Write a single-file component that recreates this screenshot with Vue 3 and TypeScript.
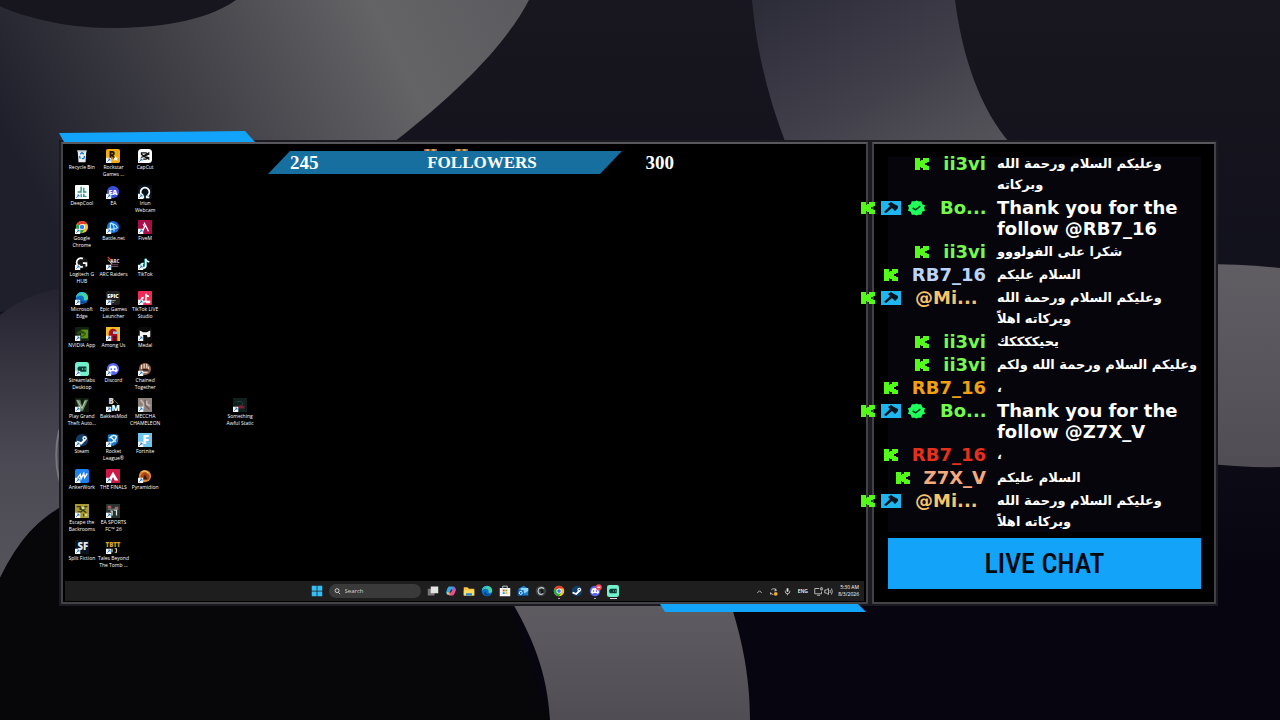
<script setup lang="ts">
interface Shape { d?: string; f?: string; s?: string; w?: number; t?: string; x?: number; y?: number; z?: number }
interface Art { bg?: string; r?: number; shapes: Shape[] }
interface Shortcut { art: string; lines: string[]; col: number; row: number; plain?: boolean }
interface Message { badges: string[]; name: string; color: string; lines: string[]; arabic?: boolean; cut?: boolean }

const disc = 'M8 1a7 7 0 1 1 0 14a7 7 0 1 1 0-14z'

const arts: Record<string, Art> = {
  bin: { shapes: [{ d: 'M3 2h10l-1 13H4z', f: '#e8eef3' }, { d: 'M2.500 1.500h11v1.500h-11z', f: '#b9c5cf' }, { d: 'M6 6l2-2 2 2M11 8l-1 3H8M6 11L5 8', s: '#1b7fd6', w: 1.6 }] },
  rockstar: { bg: '#f4a916', r: 2, shapes: [{ t: 'R', x: 7, y: 11, z: 11, f: '#151008' }, { d: 'M11 8l1 2 2 0-1.500 1.500 1 2-2.500-1-2 1 .5-2L8 10l2 0z', f: '#fff' }] },
  capcut: { bg: '#fff', r: 4, shapes: [{ d: 'M13 4L6 8l7 4M10 4.500H4v2l9 4M10 11.500H4v-2l9-4', s: '#111', w: 1.5 }] },
  deepcool: { bg: '#fff', r: 1, shapes: [{ d: 'M7 2v6H3M10 3v5h3M7 14v-4M10 10v3h3', s: '#219c83', w: 1.6 }] },
  ea: { shapes: [{ d: disc, f: '#3a50dc' }, { t: 'EA', x: 8, y: 11, z: 8, f: '#fff' }] },
  iriun: { bg: '#06111d', r: 2, shapes: [{ d: 'M5 12a5 5 0 1 1 6 0M3 14h3v-2M13 14h-3v-2', s: '#fff', w: 2 }] },
  chrome: { shapes: [{ d: disc, f: '#fbc116' }, { d: 'M8 8L2 4.500A7 7 0 0 1 14 4.500H8z', f: '#e33b2e' }, { d: 'M8 8L2 4.500A7 7 0 0 0 8 15l3-5z', f: '#2ba24c' }, { d: 'M8 4.500a3.500 3.500 0 1 1 0 7a3.500 3.500 0 1 1 0-7z', f: '#fff' }, { d: 'M8 5.500a2.500 2.500 0 1 1 0 5a2.500 2.500 0 1 1 0-5z', f: '#3b7ded' }] },
  battle: { shapes: [{ d: disc, f: '#0f6fd8' }, { d: 'M5 12V4c4 0 7 2 8 5-3 2-8 2-10 0M6 3c3 3 4 6 3 10', s: '#b9ecff', w: 1.3 }] },
  fivem: { bg: '#a80d46', r: 1, shapes: [{ d: 'M7 3l5 10M8 7l-3 6M6 5l1 2', s: '#fff', w: 1.4 }] },
  logitech: { shapes: [{ d: disc, f: '#161616' }, { d: 'M9 3a5 5 0 1 0 0 9M9 8h4v4', s: '#fff', w: 2 }] },
  arc: { shapes: [{ d: 'M2 1l6 6', s: '#d9443a', w: 1.6 }, { d: 'M2 4l5 5', s: '#e5b83b', w: 1.2 }, { t: 'ARC', x: 10, y: 8, z: 5, f: '#d8c6d6' }, { d: 'M5 10h9M6 12h8', s: '#83506c', w: 1 }] },
  tiktok: { bg: '#030303', r: 3, shapes: [{ d: 'M8.500 3v8a2.500 2.500 0 1 1-2.500-2.500M8.500 3c0 2 2 3.500 4 3.500', s: '#38d8df', w: 2.4 }, { d: 'M9 3v8a2.500 2.500 0 1 1-2.500-2.500M9 3c0 2 2 3.500 4 3.500', s: '#fff', w: 1.6 }] },
  edge: { shapes: [{ d: disc, f: '#0c71c6' }, { d: 'M1 8a7 7 0 0 1 14 0c0 3-4 3-5 2 1-3-1-5-4-5S1 7 1 8z', f: '#45d3a4' }, { d: 'M1 8a7 7 0 0 1 9-6.500C6 3 3 5 1 8z', f: '#27b7df' }, { d: 'M6 8c0 4 4 5 7 4-3 3-8 3-9-1z', f: '#0b3f8d' }] },
  epic: { bg: '#202020', r: 2, shapes: [{ t: 'EPIC', x: 8, y: 8, z: 6, f: '#fff' }, { d: 'M5 11h6M7 13h2', s: '#aaa', w: 1 }] },
  live: { bg: '#f02a56', r: 1, shapes: [{ d: 'M9 3v7a2.500 2.500 0 1 1-2.500-2.500M9 3c0 2 2 3 3.500 3', s: '#fff', w: 1.9 }, { d: 'M9 11h5v3H9z', f: '#fff' }] },
  nvidia: { bg: '#112211', r: 1, shapes: [{ d: 'M7 3h8v10H7z', f: '#5f9410' }, { d: 'M2 8c3-5 8-4 10 0-3 4-7 3-8 0 2-3 5-2 6 0', s: '#2d5210', w: 1.4 }] },
  among: { bg: '#f3bd25', r: 0, shapes: [{ d: 'M3 16V8c0-8 10-8 10 0v8z', f: '#a5122b' }, { d: 'M8 5h6v3H8z', f: '#96cbd4' }, { d: 'M8 10h4v6H8z', f: '#5c1022' }] },
  medal: { bg: '#0a0a0a', r: 2, shapes: [{ d: 'M2 4l4 2h4l4-2v7l-3 1-1-3H6l-1 3-3-1z', f: '#f2f2f2' }] },
  streamlabs: { bg: '#73f0cb', r: 3, shapes: [{ d: 'M5 5h8v6H5a2 2 0 0 1-2-2V7a2 2 0 0 1 2-2z', f: '#073d35' }, { d: 'M8 8h1M11 8h1', s: '#73f0cb', w: 1.5 }] },
  discord: { shapes: [{ d: disc, f: '#5865f2' }, { d: 'M4 5q4-2 8 0l1.500 5-2.500 2-1-1.500H6L5 12l-2.500-2z', f: '#fff' }, { d: 'M6 7v2M10 7v2', s: '#5865f2', w: 1.6 }] },
  chained: { shapes: [{ d: disc, f: '#855945' }, { d: 'M4 3v5M7 2v5M10 2v5M12 5v4M4 12h7', s: '#eed5c2', w: 1.5 }, { d: 'M5 9h7', s: '#35201d', w: 2 }] },
  gta: { bg: '#101810', r: 0, shapes: [{ d: 'M1 2h5l2 7 3-7h4L9 15H6z', f: '#638461' }, { d: 'M3 3l5 9 4-9', s: '#cdd9c1', w: 1 }] },
  bakkes: { shapes: [{ t: 'B', x: 6, y: 7, z: 9, f: '#ddd' }, { t: 'M', x: 11, y: 15, z: 10, f: '#fff' }, { d: 'M9 2l5 5', s: '#777', w: 1 }] },
  meccha: { bg: '#8e827e', r: 0, shapes: [{ d: 'M3 2l4 5-2 6M10 3v4l4 2', s: '#c8b6ad', w: 2 }, { d: 'M8 2v6l5 5', s: '#665b5b', w: 1.3 }] },
  steam: { shapes: [{ d: disc, f: '#103d69' }, { d: 'M2 10l5 2 5-5', s: '#fff', w: 2.4 }, { d: 'M11 3.500a2.500 2.500 0 1 1 0 5a2.500 2.500 0 1 1 0-5z', f: '#fff' }, { d: 'M11 5a1 1 0 1 1 0 2a1 1 0 1 1 0-2z', f: '#103d69' }] },
  rocket: { shapes: [{ d: 'M2 2l6-1 6 1v6q0 4-6 7-6-3-6-7z', f: '#1d78c9' }, { d: 'M4 6q4-5 8-2-1 5-6 7M5 4l6 6', s: '#def4ff', w: 1.5 }] },
  fortnite: { bg: '#6cc6ee', r: 0, shapes: [{ t: 'F', x: 9, y: 13, z: 14, f: '#fff' }] },
  anker: { bg: '#1d82ee', r: 2, shapes: [{ d: 'M3 10l3-4 1 5 3-6 1 5 3-5', s: '#fff', w: 1.5 }] },
  finals: { bg: '#ce1746', r: 1, shapes: [{ d: 'M2 13L8 3l6 10h-4L8 9l-2 4z', f: '#fff' }] },
  pyramid: { shapes: [{ d: disc, f: '#e08a2c' }, { d: 'M4 12a5 5 0 1 1 8 0z', f: '#a8481c' }, { d: 'M8 6l3 6H5z', f: '#43180d' }, { d: 'M4 3q5-2 8 2', s: '#f6c667', w: 1.2 }] },
  escape: { bg: '#a89a35', r: 0, shapes: [{ d: 'M2 3h4v3h5V3h3M3 9h4l2-2 4 3M10 14v-3', s: '#353817', w: 1.6 }, { d: 'M8 3h3v3H8zM11 11h3v3h-3z', f: '#e0d97b' }] },
  sports: { bg: '#26332f', r: 0, shapes: [{ d: 'M2 2h4v3H2zM10 3h4v3h-4z', f: '#b05b66' }, { d: 'M5 8h2v5M9 7h3v6', s: '#d8e0dd', w: 1.4 }, { d: 'M2 6h12', s: '#768a84', w: 1.2 }] },
  split: { bg: '#0c1220', r: 0, shapes: [{ t: 'SF', x: 9, y: 11, z: 11, f: '#dce8f7' }] },
  tales: { bg: '#080807', r: 0, shapes: [{ t: 'TBTT', x: 8, y: 8, z: 7, f: '#d5a622' }, { d: 'M7 10v4M10 10h2v4h-2', s: '#d5cfb0', w: 1.2 }] },
  awful: { bg: '#10201f', r: 0, shapes: [{ d: 'M5 10l4-2 4 1v3H6z', f: '#7d1d33' }, { d: 'M4 4h6M11 5v3', s: '#24403b', w: 1.4 }] },
  start: { shapes: [{ d: 'M1 1h6.500v6.500H1zM8.500 1H15v6.500H8.500zM1 8.500h6.500V15H1zM8.500 8.500H15V15H8.500z', f: '#35bdf5' }] },
  views: { shapes: [{ d: 'M1 5h9v9H1z', f: '#777' }, { d: 'M5 2h10v9H5z', f: '#e4e4e4' }] },
  copilot: { shapes: [{ d: 'M5 2h5l2 4H8l-3 7H3c-3-2 0-9 2-11z', f: '#2fa8e5' }, { d: 'M11 3h2c3 2 0 9-2 11H6l-2-4h4z', f: '#e55292' }, { d: 'M10 2h2l3 6-4-2z', f: '#8b60e8' }, { d: 'M2 9l3 1 2 4-4-2z', f: '#f3c450' }] },
  folder: { shapes: [{ d: 'M1 3h5l2 2h7v9H1z', f: '#f7c63c' }, { d: 'M1 7h14v7H1z', f: '#ffdc66' }, { d: 'M4 11h8v3H4z', f: '#2386d8' }] },
  store: { shapes: [{ d: 'M1 4h14v11H1z', f: '#f4f4f4' }, { d: 'M5 4V1.500h6V4', s: '#b8c9d6', w: 1.3 }, { d: 'M5 6h2.500v2.500H5z', f: '#f04a26' }, { d: 'M8.500 6H11v2.500H8.500z', f: '#79b900' }, { d: 'M5 9.500h2.500V12H5z', f: '#14a5ec' }, { d: 'M8.500 9.500H11V12H8.500z', f: '#f9b813' }] },
  outlook: { shapes: [{ d: 'M2 5l7-4 6 4v9H2z', f: '#1982d5' }, { d: 'M5 4h10v4l-5 3-5-3z', f: '#8fd6fb' }, { d: 'M1 7h8v7H1z', f: '#0862b5' }, { d: 'M5 8.500a2 2 0 1 1 0 4a2 2 0 1 1 0-4z', s: '#fff', w: 1.2 }] },
  shell: { shapes: [{ d: disc, f: '#3b4243' }, { d: 'M12 5q-3-3-7 0-2 3 0 6 3 3 6 0', s: '#c5cbcb', w: 1.5 }, { d: 'M7 7h3v3H8', s: '#111', w: 2 }] },
}

const shortcuts: Shortcut[] = [
  { art: 'bin', lines: ['Recycle Bin'], col: 1, row: 1, plain: true },
  { art: 'rockstar', lines: ['Rockstar', 'Games ...'], col: 2, row: 1 },
  { art: 'capcut', lines: ['CapCut'], col: 3, row: 1 },
  { art: 'deepcool', lines: ['DeepCool'], col: 1, row: 2 },
  { art: 'ea', lines: ['EA'], col: 2, row: 2 },
  { art: 'iriun', lines: ['Iriun', 'Webcam'], col: 3, row: 2 },
  { art: 'chrome', lines: ['Google', 'Chrome'], col: 1, row: 3 },
  { art: 'battle', lines: ['Battle.net'], col: 2, row: 3 },
  { art: 'fivem', lines: ['FiveM'], col: 3, row: 3 },
  { art: 'logitech', lines: ['Logitech G', 'HUB'], col: 1, row: 4 },
  { art: 'arc', lines: ['ARC Raiders'], col: 2, row: 4 },
  { art: 'tiktok', lines: ['TikTok'], col: 3, row: 4 },
  { art: 'edge', lines: ['Microsoft', 'Edge'], col: 1, row: 5 },
  { art: 'epic', lines: ['Epic Games', 'Launcher'], col: 2, row: 5 },
  { art: 'live', lines: ['TikTok LIVE', 'Studio'], col: 3, row: 5 },
  { art: 'nvidia', lines: ['NVIDIA App'], col: 1, row: 6 },
  { art: 'among', lines: ['Among Us'], col: 2, row: 6 },
  { art: 'medal', lines: ['Medal'], col: 3, row: 6 },
  { art: 'streamlabs', lines: ['Streamlabs', 'Desktop'], col: 1, row: 7 },
  { art: 'discord', lines: ['Discord'], col: 2, row: 7 },
  { art: 'chained', lines: ['Chained', 'Together'], col: 3, row: 7 },
  { art: 'gta', lines: ['Play Grand', 'Theft Auto...'], col: 1, row: 8 },
  { art: 'bakkes', lines: ['BakkesMod'], col: 2, row: 8 },
  { art: 'meccha', lines: ['MECCHA', 'CHAMELEON'], col: 3, row: 8 },
  { art: 'awful', lines: ['Something', 'Awful Static'], col: 6, row: 8 },
  { art: 'steam', lines: ['Steam'], col: 1, row: 9 },
  { art: 'rocket', lines: ['Rocket', 'League®'], col: 2, row: 9 },
  { art: 'fortnite', lines: ['Fortnite'], col: 3, row: 9 },
  { art: 'anker', lines: ['AnkerWork'], col: 1, row: 10 },
  { art: 'finals', lines: ['THE FINALS'], col: 2, row: 10 },
  { art: 'pyramid', lines: ['Pyramidion'], col: 3, row: 10 },
  { art: 'escape', lines: ['Escape the', 'Backrooms'], col: 1, row: 11 },
  { art: 'sports', lines: ['EA SPORTS', 'FC™ 26'], col: 2, row: 11 },
  { art: 'split', lines: ['Split Fiction'], col: 1, row: 12 },
  { art: 'tales', lines: ['Tales Beyond', 'The Tomb ...'], col: 2, row: 12 },
]

const pinned = [
  { art: 'views', label: 'Task view' }, { art: 'copilot', label: 'Copilot' }, { art: 'folder', label: 'File Explorer' },
  { art: 'edge', label: 'Edge' }, { art: 'store', label: 'Store' }, { art: 'outlook', label: 'Outlook' },
  { art: 'shell', label: 'Logitech' }, { art: 'chrome', label: 'Chrome', state: 'open' }, { art: 'steam', label: 'Steam' },
  { art: 'discord', label: 'Discord', state: 'open', alert: true }, { art: 'streamlabs', label: 'Streamlabs', state: 'active' },
]

const greeting = 'وعليكم السلام ورحمة الله'
const messages: Message[] = [
  { badges: ['kick'], name: 'ii3vi', color: '#75f94c', lines: [greeting, 'وبركاته'], arabic: true },
  { badges: ['kick', 'mod', 'check'], name: 'Bo...', color: '#75f94c', lines: ['Thank you for the', 'follow @RB7_16'], cut: true },
  { badges: ['kick'], name: 'ii3vi', color: '#75f94c', lines: ['شكرا على الفولووو'], arabic: true },
  { badges: ['kick'], name: 'RB7_16', color: '#bcd4f8', lines: ['السلام عليكم'], arabic: true },
  { badges: ['kick', 'mod'], name: '@Mi...', color: '#f8c46a', lines: [greeting, 'وبركاته اهلاً'], arabic: true, cut: true },
  { badges: ['kick'], name: 'ii3vi', color: '#75f94c', lines: ['يحيككككك'], arabic: true },
  { badges: ['kick'], name: 'ii3vi', color: '#75f94c', lines: [greeting + ' ولكم'], arabic: true },
  { badges: ['kick'], name: 'RB7_16', color: '#f0a010', lines: ['،'], arabic: true },
  { badges: ['kick', 'mod', 'check'], name: 'Bo...', color: '#75f94c', lines: ['Thank you for the', 'follow @Z7X_V'], cut: true },
  { badges: ['kick'], name: 'RB7_16', color: '#e6301c', lines: ['،'], arabic: true },
  { badges: ['kick'], name: 'Z7X_V', color: '#f5a97c', lines: ['السلام عليكم'], arabic: true },
  { badges: ['kick', 'mod'], name: '@Mi...', color: '#f8c46a', lines: [greeting, 'وبركاته اهلاً'], arabic: true, cut: true },
]
</script>

<template>
  <main class="scene">
    <svg class="backdrop" viewBox="0 0 1280 720" preserveAspectRatio="none" aria-hidden="true">
      <defs>
        <linearGradient id="base" x1="0" y1="0" x2="0" y2="1"><stop offset="0" stop-color="#18161f" /><stop offset=".5" stop-color="#10101b" /><stop offset=".8" stop-color="#070510" /><stop offset="1" stop-color="#07050f" /></linearGradient>
        <linearGradient id="ring" x1="0" y1=".4" x2="1" y2=".1"><stop offset="0" stop-color="#1f1f2b" /><stop offset=".4" stop-color="#444349" /><stop offset=".75" stop-color="#646366" /><stop offset="1" stop-color="#5c5b5f" /></linearGradient>
        <linearGradient id="ribbon" x1="0" y1="0" x2="1" y2="1"><stop offset="0" stop-color="#2c2b38" /><stop offset=".5" stop-color="#3e3d48" /><stop offset="1" stop-color="#57555b" /></linearGradient>
        <linearGradient id="side" x1="0" y1="0" x2="0" y2="1"><stop offset="0" stop-color="#23222e" /><stop offset=".6" stop-color="#4b4a54" /><stop offset="1" stop-color="#55535a" /></linearGradient>
        <linearGradient id="tail" x1="0" y1="0" x2="0" y2="1"><stop offset="0" stop-color="#605e63" /><stop offset="1" stop-color="#504e54" /></linearGradient>
      </defs>
      <path d="M0 0H1280V720H0z" fill="url(#base)" />
      <path d="M0 0H529C508 40 468 84 394 142C270 220 80 300 0 312z" fill="url(#ring)" />
      <path d="M0 0H236C205 22 155 28 110 28C64 28 20 16 0 6z" fill="#17161e" />
      <path d="M0 315Q30 292 64 288V505Q25 526 0 578z" fill="url(#side)" />
      <path d="M0 578Q28 520 64 508V604H510L550 720H0z" fill="#070709" />
      <path d="M752 0H955C962 55 980 110 1011 144H786C768 98 756 48 752 0z" fill="url(#ribbon)" />
      <path d="M1200 264Q1242 264 1280 268V467Q1245 468 1200 463z" fill="url(#tail)" />
      <path d="M505 590H726C740 630 750 672 750 720H550C547 670 532 635 505 590z" fill="url(#tail)" />
      <path d="M66 415C53 435 53 475 66 495" fill="none" stroke="#77747b" stroke-width="2" />
    </svg>

    <section class="frame screen" aria-label="Desktop">
      <svg class="accent top" viewBox="0 0 196 11" preserveAspectRatio="none" aria-hidden="true"><path d="M0 2L186 0L196 11H5z" fill="#12a3fb" /></svg>
      <svg class="accent bottom" viewBox="0 0 206 8" preserveAspectRatio="none" aria-hidden="true"><path d="M0 0H198L206 8H5z" fill="#12a3fb" /></svg>
      <div class="desk">
        <div class="shortcuts">
          <button v-for="s in shortcuts" :key="s.art" class="shortcut" type="button" :style="{ gridColumn: s.col, gridRow: s.row }">
            <svg class="art" viewBox="0 0 16 16" aria-hidden="true">
              <rect v-if="arts[s.art].bg" x="0" y="0" width="16" height="16" :rx="arts[s.art].r" :fill="arts[s.art].bg" />
              <template v-for="(p, i) in arts[s.art].shapes" :key="i">
                <text v-if="p.t" :x="p.x" :y="p.y" :font-size="p.z" :fill="p.f" class="mark">{{ p.t }}</text>
                <path v-else :d="p.d" :fill="p.f || 'none'" :stroke="p.s" :stroke-width="p.w" />
              </template>
              <g v-if="!s.plain"><path d="M0 10h6v6H0z" fill="#f4f8fb" /><path d="M1.500 14.500l3-3M2.500 11.500h2v2" fill="none" stroke="#1974c5" /></g>
            </svg>
            <span v-for="l in s.lines" :key="l">{{ l }}</span>
          </button>
        </div>
        <div class="goal">
          <i class="emote one"></i><i class="emote two"></i>
          <span>245</span><strong>FOLLOWERS</strong><span class="target">300</span>
        </div>
      </div>

      <footer class="taskbar">
        <div class="pins">
          <button type="button" class="pin" aria-label="Start"><svg viewBox="0 0 16 16"><path :d="arts.start.shapes[0].d" fill="#35bdf5" /></svg></button>
          <label class="search">
            <svg viewBox="0 0 16 16" aria-hidden="true"><circle cx="7" cy="6" r="4.500" fill="none" stroke="#ddd" stroke-width="2" /><path d="M10 10l4 4" stroke="#ddd" stroke-width="2" /></svg>
            <input type="text" placeholder="Search" aria-label="Search" />
          </label>
          <button v-for="p in pinned" :key="p.label" type="button" class="pin" :class="p.state" :aria-label="p.label">
            <svg viewBox="0 0 16 16">
              <rect v-if="arts[p.art].bg" width="16" height="16" :rx="arts[p.art].r" :fill="arts[p.art].bg" />
              <path v-for="(q, i) in arts[p.art].shapes" :key="i" :d="q.d" :fill="q.f || 'none'" :stroke="q.s" :stroke-width="q.w" />
              <circle v-if="p.alert" cx="13" cy="3" r="4" fill="#ef4d5c" />
              <path v-if="p.alert" d="M11 3h4" stroke="#fff" stroke-width="1.500" />
            </svg>
          </button>
        </div>
        <div class="tray">
          <svg viewBox="0 0 12 12"><path d="M3 8l3-3 3 3" /></svg>
          <svg viewBox="0 0 12 12"><path d="M10 5A4 4 0 0 0 3 4M2 7a4 4 0 0 0 4 3M9 2v3H7M2 10V8" /><circle cx="9" cy="9" r="2.500" fill="#f3aa2b" stroke="none" /></svg>
          <svg viewBox="0 0 12 12"><path d="M6 1.500v5M3 5v1a3 3 0 0 0 6 0V5M6 9v2" /><path d="M6 2v4" stroke-width="2.500" /></svg>
          <span class="lang">ENG</span>
          <span class="pair">
            <svg viewBox="0 0 12 12"><path d="M7 2H1v7h9V6M4 11h4M9 1h2v3H9z" /></svg>
            <svg viewBox="0 0 12 12"><path d="M1 4h2l3-2v8L3 8H1zM8 4q1 2 0 4M10 2q2 4 0 8" /></svg>
          </span>
          <time class="clock"><span>5:30 AM</span><span>8/3/2026</span></time>
        </div>
      </footer>
    </section>

    <section class="frame chat" aria-label="Live chat">
      <ul class="messages">
        <li v-for="(m, i) in messages" :key="i" class="message">
          <div class="who" :class="{ cut: m.cut }">
            <span class="badges">
              <template v-for="b in m.badges" :key="b">
                <svg v-if="b === 'kick'" class="kick" viewBox="0 0 14 12"><path d="M0 0h5v3h1V2h2V0h6v4h-2v1h-2v2h2v1h2v4H8v-2H6V9H5v3H0z" fill="#53fc18" /></svg>
                <svg v-else-if="b === 'mod'" class="mod" viewBox="0 0 20 14"><path d="M0 0h20v14H0z" fill="#1fb6ef" /><path d="M7 3l3-2 3 2 4 2v2l-3 3-2-2-1-1-6 5-2-1 6-6z" fill="#07131d" /></svg>
                <svg v-else class="check" viewBox="0 0 20 16"><path d="M10 0l2 1 3 0 1 3 3 1-1 3 1 3-3 1-1 3-3 0-2 1-2-1-3 0-1-3-3-1 1-3-1-3 3-1 1-3 3 0z" fill="#1eff5a" /><path d="M6 8l3 2 5-4" fill="none" stroke="#09351a" stroke-width="1.600" /></svg>
              </template>
            </span>
            <b :style="{ color: m.color }">{{ m.name }}</b>
          </div>
          <p :class="{ arabic: m.arabic }"><span v-for="l in m.lines" :key="l">{{ l }}</span></p>
        </li>
      </ul>
      <h2 class="title">LIVE CHAT</h2>
    </section>
  </main>
</template>

<style>
body { margin: 0; background: #09070f; }
</style>

<style scoped>
* { box-sizing: border-box; }
button { border: 0; padding: 0; margin: 0; background: none; color: inherit; font: inherit; }
svg { display: block; overflow: visible; }
.scene {
  position: relative;
  isolation: isolate;
  min-height: 100vh;
  display: grid;
  grid-template-columns: minmax(0, 807fr) minmax(0, 344fr);
  align-items: stretch;
  align-content: start;
  gap: 4px;
  padding: 142px 64px 116px 61px;
  font-family: "Open Sans", "Noto Sans", sans-serif;
  color: #fff;
  overflow: hidden;
}
.backdrop { position: absolute; inset: 0; width: 100%; height: 100%; z-index: -1; }
.frame {
  position: relative;
  border: 2px solid #434247;
  border-top-color: #58575b;
  background: #000;
  box-shadow: 0 0 0 2px #1b1a20;
}
.accent { position: absolute; }
.accent.top { left: -4px; top: -13px; width: 196px; height: 11px; }
.accent.bottom { right: 0; bottom: -10px; width: 206px; height: 8px; }

.screen { display: flex; flex-direction: column; padding: 1px; }
.desk { flex: 1; display: flex; gap: 12px; padding: 4px 2px 0; }
.shortcuts { width: 190px; height: 426px; display: grid; grid-template: repeat(12, 1fr) / repeat(6, 1fr); }
.shortcut {
  min-width: 0;
  display: flex;
  flex-direction: column;
  align-items: center;
  font-size: 5px;
  line-height: 7px;
  white-space: nowrap;
}
.art { width: 14px; height: 14px; margin-bottom: 1px; flex: none; }
.mark { font-family: "Open Sans", sans-serif; font-weight: 800; text-anchor: middle; }

.goal {
  position: relative;
  align-self: flex-start;
  width: 406px;
  height: 23px;
  display: grid;
  grid-template-columns: 1fr auto 1fr;
  margin-top: 2px;
  padding-left: 22px;
  font: bold 17px/23px "Liberation Serif", serif;
}
.goal::before {
  content: "";
  position: absolute;
  inset: 0 52px 0 0;
  background: #176f9f;
  clip-path: polygon(22px 0, 100% 0, calc(100% - 22px) 100%, 0 100%);
}
.goal span, .goal strong { position: relative; }
.goal span { font-size: 19px; line-height: 24px; }
.target { text-align: right; }
.emote { position: absolute; top: -2px; width: 13px; height: 2px; background: linear-gradient(90deg, #97405a, #e6bb62 30%, #66421d 50%, #e6bb62 70%, #97405a); }
.emote.one { left: 156px; }
.emote.two { left: 187px; }

.taskbar {
  height: 20px;
  margin: 0 1px;
  display: grid;
  grid-template-columns: 1fr auto 1fr;
  align-items: center;
  background: #1e1e1f;
}
.pins { grid-column: 2; display: flex; align-items: center; gap: 6px; }
.pin { position: relative; width: 12px; height: 12px; }
.pin svg { width: 12px; height: 12px; }
.pin.open::after, .pin.active::after { content: ""; position: absolute; left: 5px; bottom: -2px; width: 2px; height: 1px; background: #aaa; }
.pin.active::after { left: 3px; width: 7px; background: #ddd; }
.search { width: 92px; height: 14px; display: flex; align-items: center; gap: 4px; padding: 0 5px; border-radius: 7px; background: #3a3a3b; }
.search svg { width: 7px; height: 7px; flex: none; }
.search input { width: 100%; min-width: 0; border: 0; padding: 0; background: none; color: #ddd; font: 6px/12px "Open Sans", sans-serif; }
.search input::placeholder { color: #d5d5d5; opacity: 1; }
.tray { justify-self: end; display: flex; align-items: center; gap: 5px; padding-right: 5px; font-size: 5px; line-height: 7px; }
.tray svg { width: 9px; height: 9px; fill: none; stroke: #e2e2e2; }
.lang { padding: 0 1px; font-weight: 600; }
.pair { display: flex; gap: 1px; }
.clock { width: 21px; text-align: right; white-space: nowrap; }
.clock span { display: block; }

.chat { display: flex; flex-direction: column; gap: 6px; padding: 9px 13px 13px 14px; }
.messages {
  margin: 0;
  padding: 0;
  list-style: none;
  display: flex;
  flex-direction: column;
  gap: 2px;
  background: linear-gradient(transparent 4px, #05050b 4px);
}
.message { display: grid; grid-template-columns: 98px minmax(0, 1fr); gap: 11px; font: bold 18px/21px "DejaVu Sans", sans-serif; }
.who { justify-self: end; height: 21px; display: flex; align-items: center; gap: 14px; white-space: nowrap; }
.who.cut { width: 125px; }
.badges { display: flex; align-items: center; gap: 6px; }
.kick { width: 14px; height: 12px; }
.mod { width: 20px; height: 14px; }
.check { width: 19px; height: 16px; }
.message p { margin: 0; white-space: nowrap; }
.message p span { display: block; height: 21px; }
.message p.arabic { font-size: 13px; }
.title {
  margin: 0;
  height: 51px;
  text-align: center;
  background: #13a3f8;
  color: #03080d;
  font: 500 28px/51px "Roboto Condensed", Roboto, sans-serif;
}
</style>
